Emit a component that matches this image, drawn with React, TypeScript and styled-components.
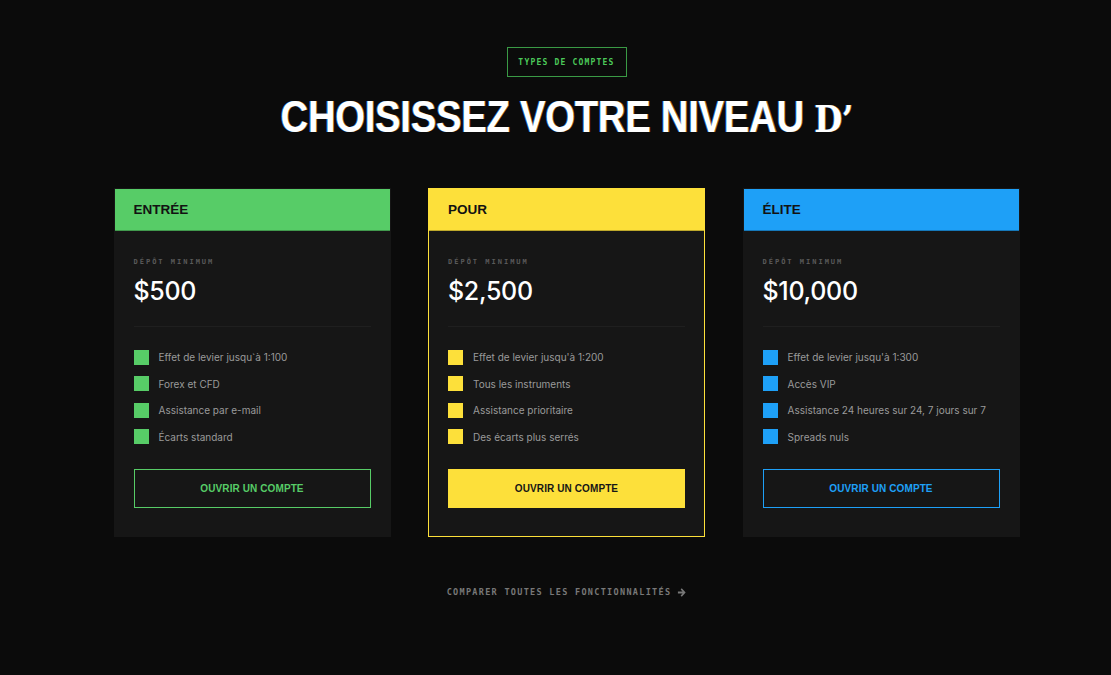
import styled, { createGlobalStyle } from "styled-components";

const GlobalStyle = createGlobalStyle`
    html, body {
        margin: 0;
        padding: 0;
        background-color: #0b0b0b;
    }
    body {
        font-family: Inter, "Noto Sans", sans-serif;
    }
`;

const MONO = `"DejaVu Sans Mono", "Liberation Mono", monospace`;

const Section = styled.section`
    display: flex;
    flex-direction: column;
    align-items: center;
    min-height: 675px;
    box-sizing: border-box;
    padding: 47px 0 0 22px;
    background-color: #0b0b0b;
`;

const Badge = styled.div`
    display: flex;
    align-items: center;
    justify-content: center;
    width: 120px;
    height: 30px;
    box-sizing: border-box;
    border: 1px solid #3a9a45;
    color: #4cc95a;
    font-family: ${MONO};
    font-weight: 700;
    font-size: 8px;
    letter-spacing: 1.2px;
`;

const Heading = styled.h2`
    margin: 14px 0 0;
    color: #ffffff;
    font-family: "Liberation Sans", Arial, sans-serif;
    font-weight: 700;
    font-size: 45px;
    line-height: 52px;
    letter-spacing: -0.3px;
    transform: scaleX(0.85);
    text-shadow: -1px 0 rgba(40, 150, 255, 0.7), 1px 0 rgba(255, 170, 40, 0.6);

    span {
        font-family: "DejaVu Serif", serif;
        font-size: 38px;
    }
`;

const CardGrid = styled.div`
    display: grid;
    grid-template-columns: repeat(3, 277px);
    column-gap: 37.5px;
    margin-top: 43px;
`;

const Card = styled.div<{ $accent: string; $featured?: boolean }>`
    display: flex;
    flex-direction: column;
    background-color: #161616;
    border: 1px solid ${(p) => (p.$featured ? p.$accent : "#161616")};
    height: 349px;
    box-sizing: border-box;
`;

const CardHeader = styled.div<{ $accent: string }>`
    display: flex;
    align-items: center;
    height: 41px;
    padding: 0 19px;
    background-color: ${(p) => p.$accent};
    border-bottom: 1px solid rgba(0, 0, 0, 0.25);
    color: #121212;
    font-family: "Liberation Sans", Arial, sans-serif;
    font-weight: 700;
    font-size: 13.5px;
`;

const CardBody = styled.div`
    display: flex;
    flex-direction: column;
    padding: 27px 19px 0;
`;

const Label = styled.div`
    color: #5a5a5a;
    font-family: ${MONO};
    font-weight: 700;
    font-size: 7px;
    letter-spacing: 2px;
`;

const Price = styled.div`
    margin-top: 10px;
    color: #ffffff;
    font-family: Inter, sans-serif;
    font-weight: 500;
    font-size: 25px;
    line-height: 30px;
    letter-spacing: -0.3px;
`;

const Divider = styled.div`
    height: 1px;
    margin-top: 20px;
    background-color: #1f1f1f;
`;

const FeatureList = styled.ul`
    list-style: none;
    margin: 23px 0 0;
    padding: 0;
    display: flex;
    flex-direction: column;
    gap: 12.5px;
`;

const Feature = styled.li<{ $accent: string }>`
    display: flex;
    align-items: center;
    gap: 10px;
    height: 14px;
    color: #9a9a9a;
    font-family: Inter, "Noto Sans", sans-serif;
    font-size: 10px;

    &::before {
        content: "";
        flex: none;
        width: 15px;
        height: 15px;
        background-color: ${(p) => p.$accent};
    }
`;

const Button = styled.button<{ $accent: string; $filled?: boolean }>`
    display: flex;
    align-items: center;
    justify-content: center;
    margin-top: 25px;
    height: 39px;
    box-sizing: border-box;
    border: 1px solid ${(p) => p.$accent};
    background-color: ${(p) => (p.$filled ? p.$accent : "transparent")};
    color: ${(p) => (p.$filled ? "#161616" : p.$accent)};
    font-family: "Liberation Sans", Arial, sans-serif;
    font-weight: 700;
    font-size: 10px;
    letter-spacing: 0.1px;
    cursor: pointer;
`;

const CompareLink = styled.a`
    display: flex;
    align-items: center;
    gap: 6px;
    margin-top: 50px;
    color: #787878;
    font-family: ${MONO};
    font-weight: 700;
    font-size: 8.5px;
    letter-spacing: 1.3px;
    text-decoration: none;
`;

type Plan = {
    name: string;
    price: string;
    accent: string;
    featured?: boolean;
    features: string[];
};

const plans: Plan[] = [
    {
        name: "ENTRÉE",
        price: "$500",
        accent: "#57cc67",
        features: ["Effet de levier jusqu`à 1:100", "Forex et CFD", "Assistance par e-mail", "Écarts standard"],
    },
    {
        name: "POUR",
        price: "$2,500",
        accent: "#fde03a",
        featured: true,
        features: ["Effet de levier jusqu'à 1:200", "Tous les instruments", "Assistance prioritaire", "Des écarts plus serrés"],
    },
    {
        name: "ÉLITE",
        price: "$10,000",
        accent: "#1ea0f7",
        features: ["Effet de levier jusqu'à 1:300", "Accès VIP", "Assistance 24 heures sur 24, 7 jours sur 7", "Spreads nuls"],
    },
];

function App() {
    return (
        <>
            <GlobalStyle />
            <Section>
                <Badge>TYPES DE COMPTES</Badge>
                <Heading>
                    CHOISISSEZ VOTRE NIVEAU <span>D’</span>
                </Heading>
                <CardGrid>
                    {plans.map((plan) => (
                        <Card key={plan.name} $accent={plan.accent} $featured={plan.featured}>
                            <CardHeader $accent={plan.accent}>{plan.name}</CardHeader>
                            <CardBody>
                                <Label>DÉPÔT MINIMUM</Label>
                                <Price>{plan.price}</Price>
                                <Divider />
                                <FeatureList>
                                    {plan.features.map((f) => (
                                        <Feature key={f} $accent={plan.accent}>{f}</Feature>
                                    ))}
                                </FeatureList>
                                <Button $accent={plan.accent} $filled={plan.featured}>
                                    OUVRIR UN COMPTE
                                </Button>
                            </CardBody>
                        </Card>
                    ))}
                </CardGrid>
                <CompareLink href="#">
                    COMPARER TOUTES LES FONCTIONNALITÉS
                    <svg width="9" height="9" viewBox="0 0 10 10">
                        <path d="M1 4h5.2L4 1.6 5.3 0.4 9.6 5 5.3 9.6 4 8.4 6.2 6H1z" fill="#787878" />
                    </svg>
                </CompareLink>
            </Section>
        </>
    );
}

export default App;
